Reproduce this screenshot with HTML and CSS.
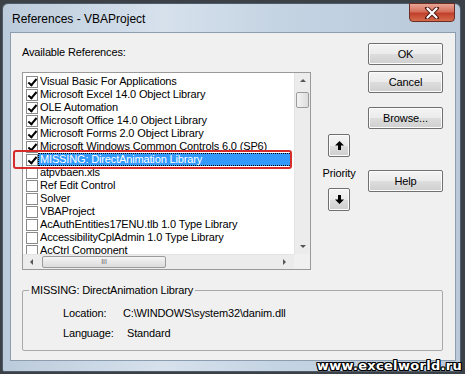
FILE: index.html
```html
<!DOCTYPE html>
<html lang="en">
<head>
    <meta charset="UTF-8">
    <title>References - VBAProject</title>
    <link rel="stylesheet" href="styles.css">
</head>
<body>
    <div class="window">
        <div class="titlebar">
            <span class="title">References - VBAProject</span>
            <div class="close">
                <svg width="16" height="12" viewBox="0 0 16 12">
                    <path d="M3 1 L13 11 M13 1 L3 11" stroke="#4a1a14" stroke-width="4" stroke-linecap="round"/>
                    <path d="M3.5 1.5 L12.5 10.5 M12.5 1.5 L3.5 10.5" stroke="#fff" stroke-width="2.2" stroke-linecap="round"/>
                </svg>
            </div>
        </div>

        <div class="client">
            <div class="main">
                <div class="left">
                    <div class="caption">Available References:</div>
                    <div class="listbox">
                        <div class="list-area">
                            <ul class="items">
                                <li><span class="check on"></span><span class="name">Visual Basic For Applications</span></li>
                                <li><span class="check on"></span><span class="name">Microsoft Excel 14.0 Object Library</span></li>
                                <li><span class="check on"></span><span class="name">OLE Automation</span></li>
                                <li><span class="check on"></span><span class="name">Microsoft Office 14.0 Object Library</span></li>
                                <li><span class="check on"></span><span class="name">Microsoft Forms 2.0 Object Library</span></li>
                                <li><span class="check on"></span><span class="name">Microsoft Windows Common Controls 6.0 (SP6)</span></li>
                                <li class="selected"><span class="check on"></span><span class="name">MISSING: DirectAnimation Library</span></li>
                                <li><span class="check"></span><span class="name">atpvbaen.xls</span></li>
                                <li><span class="check"></span><span class="name">Ref Edit Control</span></li>
                                <li><span class="check"></span><span class="name">Solver</span></li>
                                <li><span class="check"></span><span class="name">VBAProject</span></li>
                                <li><span class="check"></span><span class="name">AcAuthEntities17ENU.tlb 1.0 Type Library</span></li>
                                <li><span class="check"></span><span class="name">AccessibilityCplAdmin 1.0 Type Library</span></li>
                                <li class="last"><span class="check"></span><span class="name">AcCtrl Component</span></li>
                            </ul>
                            <div class="vscroll">
                                <span class="arrow up"></span>
                                <span class="vthumb"></span>
                                <span class="arrow down"></span>
                            </div>
                        </div>
                        <div class="hscroll-row">
                            <div class="hscroll">
                                <span class="arrow left"></span>
                                <span class="hthumb">III</span>
                                <span class="arrow right"></span>
                            </div>
                            <div class="corner"></div>
                        </div>
                    </div>
                </div>

                <div class="priority">
                    <button class="btn small">
                        <svg width="9" height="9" viewBox="0 0 9 9"><path d="M4.5 0 L9 4.5 L6 4.5 L6 9 L3 9 L3 4.5 L0 4.5 Z" fill="#000"/></svg>
                    </button>
                    <span class="priority-label">Priority</span>
                    <button class="btn small">
                        <svg width="9" height="9" viewBox="0 0 9 9"><path d="M4.5 9 L9 4.5 L6 4.5 L6 0 L3 0 L3 4.5 L0 4.5 Z" fill="#000"/></svg>
                    </button>
                </div>

                <div class="buttons">
                    <button class="btn">OK</button>
                    <button class="btn cancel">Cancel</button>
                    <button class="btn browse">Browse...</button>
                    <button class="btn help">Help</button>
                </div>
            </div>

            <fieldset class="details">
                <legend>MISSING: DirectAnimation Library</legend>
                <div class="detail-grid">
                    <span>Location:</span><span>C:\WINDOWS\system32\danim.dll</span>
                    <span>Language:</span><span class="shift">Standard</span>
                </div>
            </fieldset>
        </div>

        <div class="annotation"></div>
        <div class="watermark">www.excelworld.ru</div>
    </div>
</body>
</html>
```

FILE: styles.css
```css
* {
    padding: 0;
    margin: 0;
    box-sizing: border-box;
}
body {
    width: 465px;
    height: 374px;
    overflow: hidden;
    background-color: #3b4146;
    font-family: "Liberation Sans", Arial, sans-serif;
    font-size: 11px;
    letter-spacing: -0.15px;
    color: #000;
    padding: 3px 0 0 2px;
}

.window {
    position: relative;
    width: 459px;
    height: 369px;
    border-radius: 6px 6px 2px 2px;
    border: 1px solid #4f5b66;
    background: linear-gradient(90deg, #bccbdb 0%, #d6e1ec 35%, #c5d4e3 60%, #b9c9da 100%);
}

.titlebar {
    height: 28px;
    display: flex;
    justify-content: space-between;
    align-items: flex-start;
    padding-left: 9px;
}
.title {
    font-size: 12px;
    letter-spacing: 0;
    line-height: 14px;
    margin-top: 8px;
    color: #000;
}
.close {
    width: 46px;
    height: 19px;
    margin-right: 5px;
    margin-top: -1px;
    border: 1px solid #6b2c22;
    border-radius: 0 0 4px 4px;
    background: linear-gradient(#e7a595 0%, #d56e5a 45%, #c0402b 55%, #d46a4c 100%);
    display: flex;
    align-items: center;
    justify-content: center;
}

.client {
    height: 329px;
    margin-left: 7px;
    width: 446px;
    border: 1px solid #8c9db0;
    background-color: #f0f0f0;
    padding: 10px 12px 0 11px;
}

.main {
    display: flex;
    height: 227px;
}
.left {
    width: 289px;
}
.caption {
    line-height: 16px;
    padding-top: 1px;
    margin-bottom: 12px;
}

.listbox {
    width: 289px;
    height: 198px;
    border: 1px solid #9a9a9a;
    background-color: #fff;
}
.list-area {
    display: flex;
    height: 181px;
}
.items {
    list-style: none;
    width: 271px;
    overflow: hidden;
    padding-top: 2px;
}
.items li {
    display: flex;
    align-items: center;
    height: 13px;
    padding-left: 3px;
    white-space: nowrap;
}
.items li.last {
    height: 10px;
    align-items: flex-start;
    overflow: hidden;
}
.items li.last .check {
    margin-top: 1px;
}
.check {
    width: 12px;
    height: 12px;
    border: 1px solid #8a8a8a;
    background-color: #fff;
    margin-right: 1px;
    flex: none;
    position: relative;
}
.check.on::after {
    content: "";
    position: absolute;
    left: 3px;
    top: 0;
    width: 3px;
    height: 7px;
    border: solid #000;
    border-width: 0 2px 2px 0;
    transform: rotate(40deg);
}
.name {
    line-height: 13px;
    padding-left: 1px;
}
.selected .name {
    flex: 1;
    background-color: #3399ff;
    color: #fff;
    outline: 1px dotted #000;
    outline-offset: -1px;
    margin-right: 2px;
    margin-left: -1px;
    padding-left: 2px;
}

.vscroll {
    width: 16px;
    background-color: #ececec;
    border-left: 1px solid #e4e4e4;
    position: relative;
}
.vthumb {
    display: block;
    width: 13px;
    height: 16px;
    margin: 0 0 0 1px;
    position: absolute;
    top: 19px;
    border: 1px solid #9b9b9b;
    border-radius: 2px;
    background: linear-gradient(90deg, #f4f4f4, #dcdcdc);
}
.arrow {
    position: absolute;
    width: 0;
    height: 0;
    border: 3px solid transparent;
}
.arrow.up {
    left: 5px;
    top: 6px;
    border-bottom-color: #555;
    border-top-width: 0;
}
.arrow.down {
    left: 5px;
    bottom: 6px;
    border-top-color: #555;
    border-bottom-width: 0;
}

.hscroll-row {
    display: flex;
    height: 15px;
}
.hscroll {
    width: 271px;
    position: relative;
    background-color: #ececec;
    border-top: 1px solid #e4e4e4;
}
.corner {
    width: 16px;
    background-color: #f0f0f0;
}
.hthumb {
    position: absolute;
    left: 19px;
    top: 1px;
    width: 124px;
    height: 12px;
    border: 1px solid #9b9b9b;
    border-radius: 2px;
    background: linear-gradient(#f4f4f4, #dcdcdc);
    font-size: 7px;
    line-height: 10px;
    text-align: center;
    color: #666;
}
.arrow.left {
    left: 7px;
    top: 4px;
    border-right-color: #555;
    border-left-width: 0;
}
.arrow.right {
    right: 8px;
    top: 4px;
    border-left-color: #555;
    border-right-width: 0;
}

.priority {
    width: 56px;
    display: flex;
    flex-direction: column;
    align-items: center;
    padding-top: 91px;
}
.priority-label {
    line-height: 16px;
    margin-top: 8px;
    margin-bottom: 7px;
}

.btn {
    font-family: "Liberation Sans", Arial, sans-serif;
    font-size: 11px;
    letter-spacing: -0.1px;
    color: #000;
    width: 75px;
    height: 22px;
    border: 1px solid #707070;
    border-radius: 2px;
    background: linear-gradient(#f4f4f4 0%, #ebebeb 50%, #dddddd 51%, #cfcfcf 100%);
    box-shadow: inset 0 0 0 1px #fcfcfc;
    display: flex;
    align-items: center;
    justify-content: center;
}
.btn.small {
    width: 22px;
    height: 23px;
}

.buttons {
    display: flex;
    flex-direction: column;
    margin-left: 1px;
}
.cancel {
    margin-top: 6px;
}
.browse {
    margin-top: 14px;
}
.help {
    margin-top: 41px;
}

.details {
    width: 421px;
    margin-top: 13px;
    border: 1px solid #a8a8a8;
    border-radius: 2px;
    padding: 6px 0 7px 6px;
}
.details legend {
    padding: 0 2px;
    line-height: 14px;
}
.detail-grid {
    display: grid;
    grid-template-columns: 60px auto;
    line-height: 20px;
    margin-left: 34px;
}
.shift {
    padding-left: 4px;
}

/* red mark drawn over the screenshot */
.annotation {
    position: absolute;
    left: 10px;
    top: 146px;
    width: 279px;
    height: 19px;
    border: 2px solid #d52b2b;
    border-radius: 3px;
}

.watermark {
    position: absolute;
    right: -2px;
    bottom: -3px;
    font-family: "DejaVu Sans", sans-serif;
    font-weight: bold;
    font-size: 13px;
    line-height: 16px;
    color: #fff;
    letter-spacing: 0.3px;
    text-shadow: 1px 0 0 #000, -1px 0 0 #000, 0 1px 0 #000, 0 -1px 0 #000,
        1px 1px 0 #000, -1px -1px 0 #000, 1px -1px 0 #000, -1px 1px 0 #000;
}
```
